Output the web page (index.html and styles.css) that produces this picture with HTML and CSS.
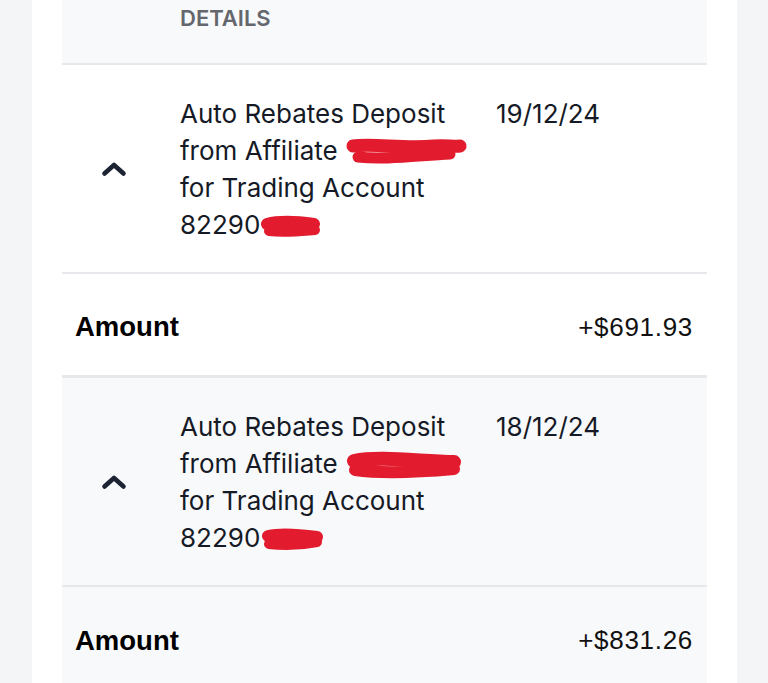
FILE: index.html
```html
<!DOCTYPE html>
<html>
<head>
<meta charset="utf-8">
<link rel="stylesheet" href="styles.css">
</head>
<body>
<div class="card">
  <div class="head">
    <span class="head-label">DETAILS</span>
  </div>

  <div class="row details white">
    <div class="toggle">
      <svg width="26" height="16" viewBox="0 0 26 16"><polyline points="3.5,12.5 13,4 22.5,12.5" fill="none" stroke="#1c2434" stroke-width="4.6" stroke-linecap="round" stroke-linejoin="round"/></svg>
    </div>
    <div class="desc">
      Auto Rebates Deposit<br>
      from Affiliate<svg class="redact r-long" width="124" height="30" viewBox="0 0 124 30"><path d="M9 9 C30 6, 60 12, 90 9 C102 8, 110 10, 116 9" fill="none" stroke="#e31b2e" stroke-width="13" stroke-linecap="round"/><path d="M14 20 C40 23, 70 19, 106 17" fill="none" stroke="#e31b2e" stroke-width="11" stroke-linecap="round"/></svg><br>
      for Trading Account<br>
      82290<svg class="redact r-short" width="62" height="24" viewBox="0 0 62 24"><path d="M7 9 C22 5, 40 7, 54 9" fill="none" stroke="#e31b2e" stroke-width="12" stroke-linecap="round"/><path d="M9 16 C25 18, 42 16, 55 15" fill="none" stroke="#e31b2e" stroke-width="10" stroke-linecap="round"/></svg>
    </div>
    <div class="date">19/12/24</div>
  </div>
  <div class="row amount white thick">
    <span class="amount-label">Amount</span>
    <span class="amount-value">+$691.93</span>
  </div>

  <div class="row details grey">
    <div class="toggle">
      <svg width="26" height="16" viewBox="0 0 26 16"><polyline points="3.5,12.5 13,4 22.5,12.5" fill="none" stroke="#1c2434" stroke-width="4.6" stroke-linecap="round" stroke-linejoin="round"/></svg>
    </div>
    <div class="desc">
      Auto Rebates Deposit<br>
      from Affiliate<svg class="redact r-long2" width="122" height="32" viewBox="0 0 122 32"><path d="M10 11 C35 6, 72 11, 110 12" fill="none" stroke="#e31b2e" stroke-width="14" stroke-linecap="round"/><path d="M11 20 C40 24, 76 22, 110 19" fill="none" stroke="#e31b2e" stroke-width="12" stroke-linecap="round"/></svg><br>
      for Trading Account<br>
      82290<svg class="redact r-short" width="64" height="24" viewBox="0 0 64 24"><path d="M8 8 C22 5, 42 7, 57 9" fill="none" stroke="#e31b2e" stroke-width="12" stroke-linecap="round"/><path d="M9 16 C25 18, 42 17, 57 14" fill="none" stroke="#e31b2e" stroke-width="10" stroke-linecap="round"/></svg>
    </div>
    <div class="date">18/12/24</div>
  </div>
  <div class="row amount grey">
    <span class="amount-label">Amount</span>
    <span class="amount-value">+$831.26</span>
  </div>
</div>
</body>
</html>
```

FILE: styles.css
```css
html, body {
  margin: 0;
  padding: 0;
}
body {
  background: #f4f5f7;
  font-family: Inter, "Noto Sans", sans-serif;
  color: #151a26;
}
.card {
  background: #ffffff;
  margin: 0 31px 0 32px;
  padding: 0 30px;
  min-height: 683px;
}
.head {
  background: #f8f9fb;
  height: 65px;
  border-bottom: 2px solid #e6e8ec;
  padding-left: 118px;
  box-sizing: border-box;
  padding-top: 5px;
}
.head-label {
  font-size: 22px;
  font-weight: 600;
  color: #64676d;
  line-height: 26px;
}
.row {
  border-bottom: 2px solid #e6e8ec;
}
.row.thick {
  border-bottom-width: 3px;
}
.white { background: #ffffff; }
.grey { background: #f8f9fb; }
.details {
  display: grid;
  grid-template-columns: 104px 302px 1fr;
  column-gap: 14px;
  padding: 30px 0 29px;
  align-items: center;
}
.toggle {
  display: flex;
  justify-content: center;
  align-items: center;
}
.toggle svg { display: block; }
.desc {
  font-size: 26px;
  line-height: 37px;
  align-self: start;
  white-space: nowrap;
}
.date {
  font-size: 26px;
  line-height: 37px;
  align-self: start;
}
.redact {
  vertical-align: middle;
  margin-left: 6px;
}
.r-long { position: relative; top: -1px; }
.r-short { margin-left: 0; }
.amount {
  display: flex;
  justify-content: space-between;
  align-items: center;
  height: 104px;
  box-sizing: border-box;
  padding: 5px 14px 0 13px;
}
.amount-label {
  font-family: "Liberation Sans", Arial, sans-serif;
  font-weight: 700;
  font-size: 27.5px;
  color: #000;
}
.amount-value {
  font-family: "Liberation Sans", Arial, sans-serif;
  font-size: 26px;
  letter-spacing: 0.7px;
  color: #111;
}
```
